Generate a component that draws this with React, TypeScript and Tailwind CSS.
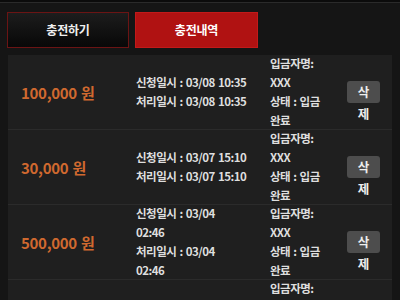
import React from 'react';

type Row = {
  amount: string;
  lines: string[];
};

const rows: Row[] = [
  { amount: '100,000 원', lines: ['신청일시 : 03/08 10:35', '처리일시 : 03/08 10:35'] },
  { amount: '30,000 원', lines: ['신청일시 : 03/07 15:10', '처리일시 : 03/07 15:10'] },
  { amount: '500,000 원', lines: ['신청일시 : 03/04', '02:46', '처리일시 : 03/04', '02:46'] },
  { amount: '50,000 원', lines: ['신청일시 : 03/02 11:20', '처리일시 : 03/02 11:20'] },
];

function HistoryRow({ row }: { row: Row }) {
  return (
    <div className="flex h-[75px] shrink-0 items-center border-b border-[#2b2b2b] text-[11.5px] leading-[19px] tracking-[-0.5px] [word-spacing:1px] text-[#dedede]">
      <div className="w-[128px] shrink-0 pl-[13px] text-[15px] font-bold tracking-[-0.3px] text-[#d0692f]">
        {row.amount}
      </div>
      <div className="flex w-[134px] shrink-0 flex-col font-bold">
        {row.lines.map((l, i) => (
          <span key={i}>{l}</span>
        ))}
      </div>
      <div className="flex w-[77px] shrink-0 flex-col font-bold">
        <span>입금자명:</span>
        <span>XXX</span>
        <span>상태 : 입금</span>
        <span>완료</span>
      </div>
      <div className="flex w-[33px] shrink-0 flex-col items-center pt-[19px] tracking-normal">
        <div className="flex h-[22px] w-[33px] items-center justify-center rounded-[3px] bg-[#4d4d4d] text-[12.5px] font-bold text-[#eeeeee]">
          삭
        </div>
        <span className="mt-[1px] text-[12.5px] font-bold text-[#eeeeee]">제</span>
      </div>
    </div>
  );
}

export default function App() {
  return (
    <div
      className="flex min-h-[300px] w-[400px] flex-col bg-[#151515]"
      style={{ fontFamily: '"Noto Sans CJK KR", "Noto Sans", sans-serif' }}
    >
      <div className="h-[3px] shrink-0 border-b border-[#2a2a2a] bg-[#0b0b0b]" />
      <div className="flex shrink-0 gap-[6px] px-[7px] pt-[9px]">
        <button className="flex h-[36px] w-[122px] items-center justify-center border border-[#6b1414] bg-gradient-to-b from-[#1d1d1d] to-[#080808] text-[12px] font-bold tracking-[-0.2px] text-[#f0f0f0]">
          충전하기
        </button>
        <button className="flex h-[36px] w-[123px] items-center justify-center border border-[#c21a1a] bg-[#b01212] text-[12px] font-bold tracking-[-0.2px] text-white">
          충전내역
        </button>
      </div>
      <div className="mx-[8px] mt-[7px] flex flex-col bg-[#1f1f1f]">
        {rows.map((r, i) => (
          <HistoryRow key={i} row={r} />
        ))}
      </div>
    </div>
  );
}
